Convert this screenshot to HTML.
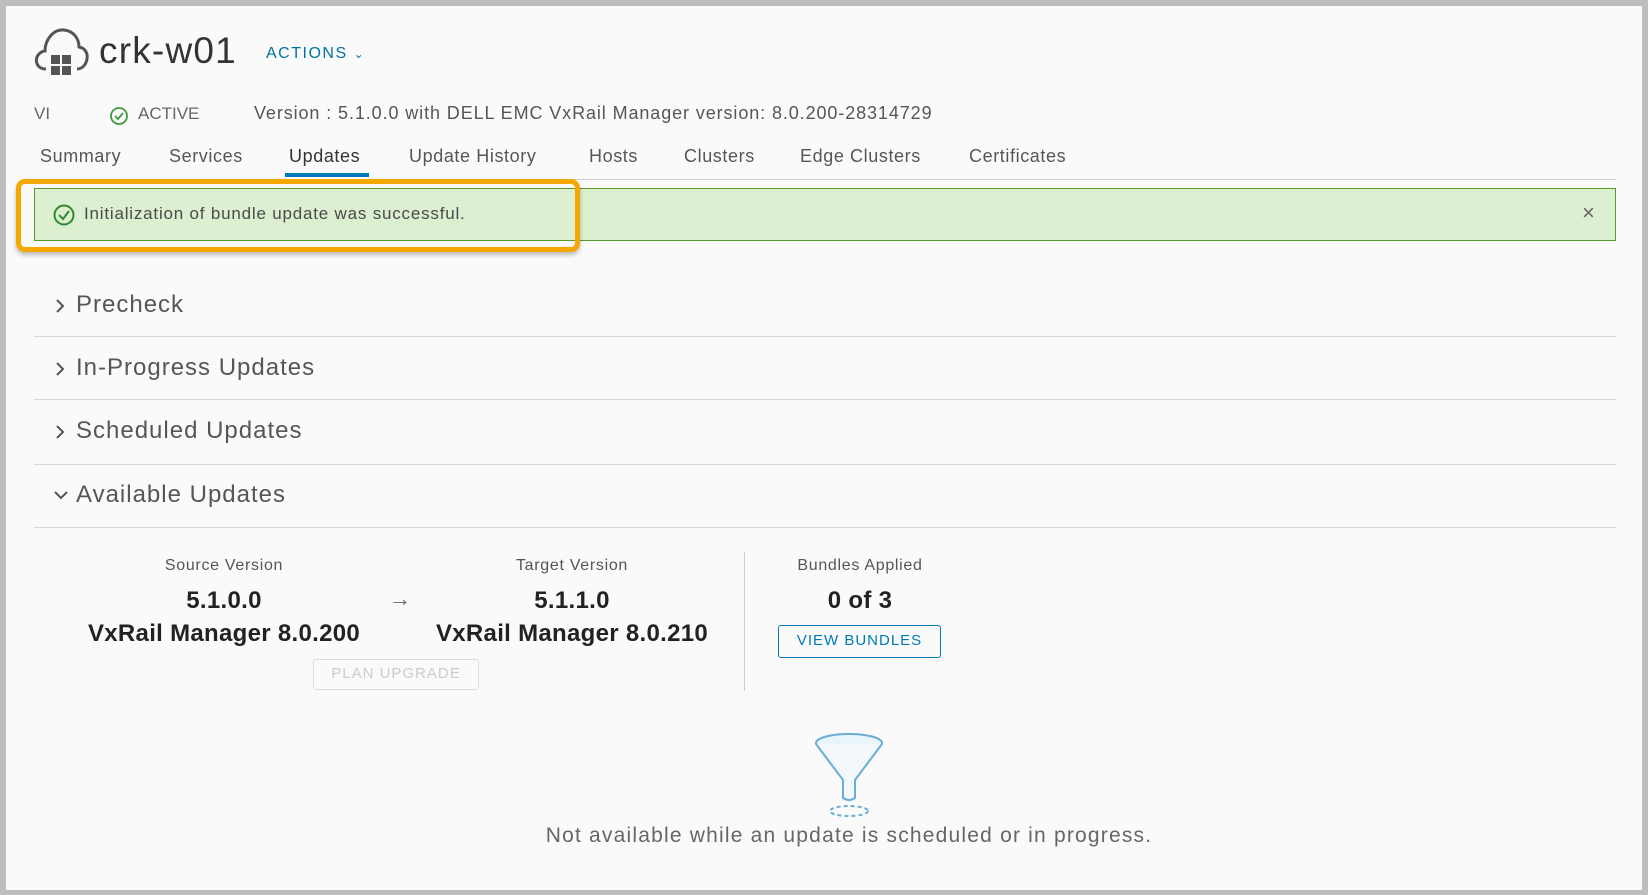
<!DOCTYPE html>
<html><head><meta charset="utf-8"><style>
*{margin:0;padding:0;box-sizing:border-box}
body{width:1648px;height:895px;background:#bdbdbd;font-family:"Liberation Sans",sans-serif;color:#565656;position:relative;overflow:hidden}
.frame{position:absolute;left:6px;top:6px;width:1636px;height:884px;background:#fafafa}
.a{position:absolute;white-space:nowrap}
.c{transform:translateX(-50%);text-align:center}
.tab{position:absolute;top:146px;font-size:18px;color:#565656;letter-spacing:.6px}
.sec{position:absolute;left:76px;font-size:24px;color:#565656;letter-spacing:1px}
.line{position:absolute;left:34px;width:1582px;height:1px;background:#d7d7d7}
.lbl{font-size:16px;color:#555;letter-spacing:.7px}
.num{font-size:24px;color:#222;font-weight:bold;letter-spacing:.3px}
</style></head><body>
<div class="frame"></div>
<svg class="a" style="left:32px;top:25px" width="58" height="52" viewBox="0 0 58 52">
<path d="M14 44 C4 44 2 34 7 29 C9 27 11 26 13 26 C13 14 22 4 32 5 C42 6 47 14 47 22 C53 23 56 28 55 34 C54 40 50 44 45 44" fill="none" stroke="#555" stroke-width="3"/>
<rect x="19" y="30" width="9" height="9" fill="#555"/><rect x="30" y="30" width="9" height="9" fill="#555"/>
<rect x="19" y="41" width="9" height="9" fill="#555"/><rect x="30" y="41" width="9" height="9" fill="#555"/>
</svg>
<div class="a" style="left:99px;top:30px;font-size:37px;color:#333;letter-spacing:1.2px">crk-w01</div>
<div class="a" style="left:266px;top:45px;font-size:16px;color:#0072a3;letter-spacing:1.5px">ACTIONS <span style="font-size:12px">&#8964;</span></div>
<div class="a" style="left:34px;top:104px;font-size:17px;color:#666">VI</div>
<svg class="a" style="left:109px;top:106px" width="20" height="20"><circle cx="10" cy="10" r="8" fill="none" stroke="#3c9a3c" stroke-width="1.8"/><path d="M6 10 L9 13 L14 7" fill="none" stroke="#3c9a3c" stroke-width="1.8"/></svg>
<div class="a" style="left:138px;top:104px;font-size:17px;color:#666">ACTIVE</div>
<div class="a" style="left:254px;top:103px;font-size:18px;color:#565656;letter-spacing:.9px">Version : 5.1.0.0 with DELL EMC VxRail Manager version: 8.0.200-28314729</div>
<div class="tab" style="left:40px">Summary</div>
<div class="tab" style="left:169px">Services</div>
<div class="tab" style="left:289px;color:#333">Updates</div>
<div class="tab" style="left:409px">Update History</div>
<div class="tab" style="left:589px">Hosts</div>
<div class="tab" style="left:684px">Clusters</div>
<div class="tab" style="left:800px">Edge Clusters</div>
<div class="tab" style="left:969px">Certificates</div>
<div class="a" style="left:34px;top:179px;width:1582px;height:1px;background:#ccc"></div>
<div class="a" style="left:285px;top:173px;width:84px;height:4px;background:#0079b8"></div>
<div class="a" style="left:34px;top:188px;width:1582px;height:53px;background:#dcefd0;border:1.5px solid #5a9a2a"></div>
<svg class="a" style="left:52px;top:203px" width="24" height="24"><circle cx="12" cy="12" r="9.5" fill="none" stroke="#2f8a2f" stroke-width="2"/><path d="M7 12 L11 16 L17 8" fill="none" stroke="#2f8a2f" stroke-width="2"/></svg>
<div class="a" style="left:84px;top:204px;font-size:17px;color:#4a4a4a;letter-spacing:.8px">Initialization of bundle update was successful.</div>
<div class="a" style="left:1582px;top:200px;font-size:22px;color:#666">×</div>
<div class="a" style="left:16px;top:179px;width:564px;height:73px;border:5px solid #f5a800;border-radius:9px;box-shadow:0 3px 4px rgba(0,0,0,.25)"></div>
<svg class="a" style="left:54px;top:297px" width="12" height="18"><path d="M3 3 L9 9 L3 15" fill="none" stroke="#555" stroke-width="2"/></svg>
<div class="sec" style="top:291px">Precheck</div>
<div class="line" style="top:336px"></div>
<svg class="a" style="left:54px;top:360px" width="12" height="18"><path d="M3 3 L9 9 L3 15" fill="none" stroke="#555" stroke-width="2"/></svg>
<div class="sec" style="top:354px">In-Progress Updates</div>
<div class="line" style="top:399px"></div>
<svg class="a" style="left:54px;top:423px" width="12" height="18"><path d="M3 3 L9 9 L3 15" fill="none" stroke="#555" stroke-width="2"/></svg>
<div class="sec" style="top:417px">Scheduled Updates</div>
<div class="line" style="top:464px"></div>
<svg class="a" style="left:53px;top:489px" width="16" height="12"><path d="M2 3 L8 9 L14 3" fill="none" stroke="#555" stroke-width="2"/></svg>
<div class="sec" style="top:481px">Available Updates</div>
<div class="line" style="top:527px"></div>
<div class="a c lbl" style="left:224px;top:557px">Source Version</div>
<div class="a c num" style="left:224px;top:587px">5.1.0.0</div>
<div class="a c num" style="left:224px;top:620px">VxRail Manager 8.0.200</div>
<div class="a c" style="left:400px;top:586px;font-size:22px;color:#666">&#8594;</div>
<div class="a c lbl" style="left:572px;top:557px">Target Version</div>
<div class="a c num" style="left:572px;top:587px">5.1.1.0</div>
<div class="a c num" style="left:572px;top:620px">VxRail Manager 8.0.210</div>
<div class="a" style="left:313px;top:659px;width:166px;height:31px;border:1.5px solid #ddd;border-radius:3px;font-size:15px;color:#ccc;text-align:center;line-height:28px;letter-spacing:1px">PLAN UPGRADE</div>
<div class="a" style="left:744px;top:552px;width:1px;height:139px;background:#ccc"></div>
<div class="a c lbl" style="left:860px;top:557px">Bundles Applied</div>
<div class="a c num" style="left:860px;top:587px">0 of 3</div>
<div class="a" style="left:778px;top:625px;width:163px;height:33px;border:1.5px solid #0079b8;border-radius:3px;font-size:15px;color:#0079b8;text-align:center;line-height:30px;letter-spacing:1px">VIEW BUNDLES</div>
<svg class="a" style="left:812px;top:730px" width="74" height="90" viewBox="0 0 74 90">
<ellipse cx="37" cy="13" rx="33" ry="9" fill="#eaf4fb" stroke="#6aaed6" stroke-width="2"/>
<path d="M4 14 L31 50 L31 68 Q37 72 43 68 L43 50 L70 14" fill="#f2f8fc" stroke="#6aaed6" stroke-width="2"/>
<ellipse cx="37" cy="81" rx="19" ry="5" fill="none" stroke="#6aaed6" stroke-width="2" stroke-dasharray="4 3"/>
</svg>
<div class="a c" style="left:849px;top:824px;font-size:21px;color:#666;letter-spacing:1.2px">Not available while an update is scheduled or in progress.</div>
</body></html>
